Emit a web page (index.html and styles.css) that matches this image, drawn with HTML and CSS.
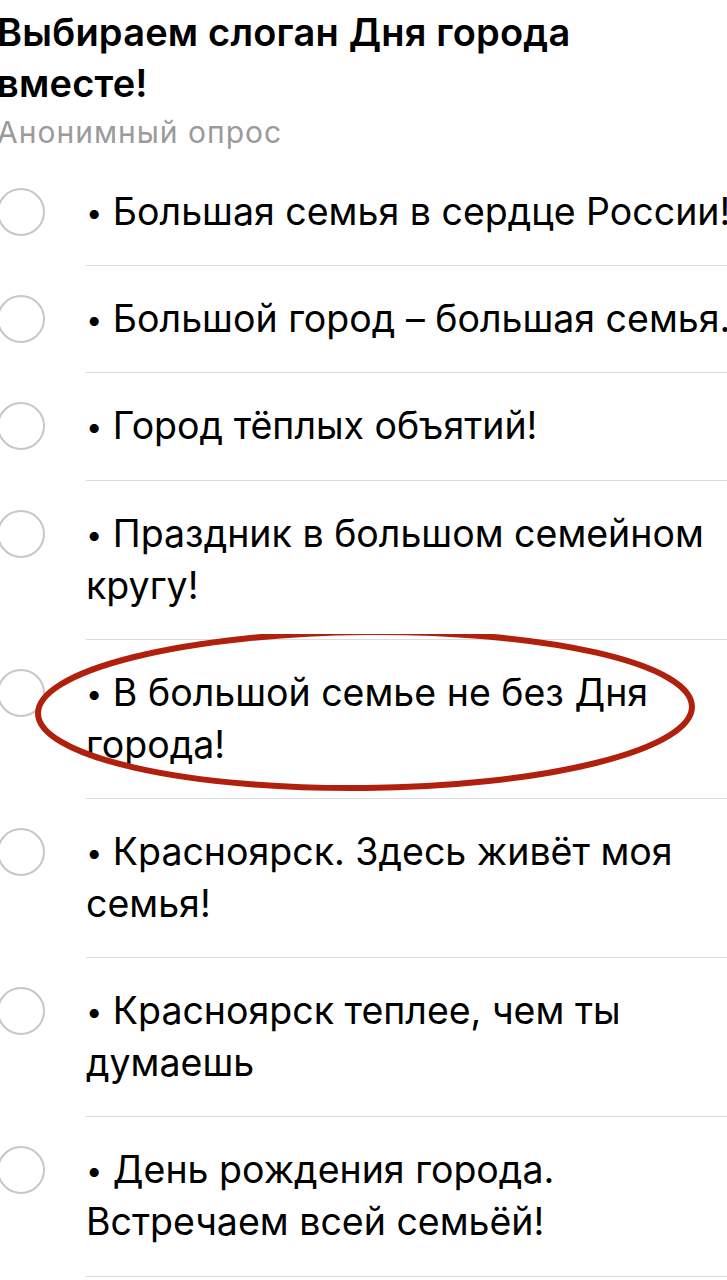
FILE: index.html
```html
<!DOCTYPE html>
<html lang="ru">
<head>
    <meta charset="UTF-8">
    <meta name="viewport" content="width=device-width, initial-scale=1.0">
    <title>Выбираем слоган Дня города вместе!</title>
    <link rel="stylesheet" href="styles.css">
</head>
<body>

<div class="poll">
    <h2 class="poll-title">Выбираем слоган Дня города<br>вместе!</h2>
    <div class="poll-type">Анонимный опрос</div>

    <ul class="options">
        <li class="option">
            <span class="radio"></span>
            <span class="option-text"><span class="dot">•</span> Большая семья в сердце России!</span>
        </li>
        <li class="option">
            <span class="radio"></span>
            <span class="option-text"><span class="dot">•</span> Большой город – большая семья.</span>
        </li>
        <li class="option">
            <span class="radio"></span>
            <span class="option-text"><span class="dot">•</span> Город тёплых объятий!</span>
        </li>
        <li class="option">
            <span class="radio"></span>
            <span class="option-text"><span class="dot">•</span> Праздник в большом семейном<br>кругу!</span>
        </li>
        <li class="option marked">
            <span class="radio"></span>
            <span class="option-text"><span class="dot">•</span> В большой семье не без Дня<br>города!</span>
            <!-- hand drawn mark -->
            <svg class="mark" width="680" height="180" viewBox="0 0 680 180">
                <ellipse cx="331" cy="76" rx="327" ry="78" fill="none" stroke="#b11f0d" stroke-width="6" transform="rotate(-0.6 331 76)"/>
            </svg>
        </li>
        <li class="option">
            <span class="radio"></span>
            <span class="option-text"><span class="dot">•</span> Красноярск. Здесь живёт моя<br>семья!</span>
        </li>
        <li class="option">
            <span class="radio"></span>
            <span class="option-text"><span class="dot">•</span> Красноярск теплее, чем ты<br>думаешь</span>
        </li>
        <li class="option">
            <span class="radio"></span>
            <span class="option-text"><span class="dot">•</span> День рождения города.<br>Встречаем всей семьёй!</span>
        </li>
    </ul>
</div>

</body>
</html>
```

FILE: styles.css
```css
body {
    margin: 0;
    background: #fff;
    color: #000;
    font-family: Inter, Roboto, "Noto Sans", Arial, sans-serif;
    overflow: hidden;
    width: 727px;
    height: 1280px;
}
.poll {
    margin-left: -3px;
    padding-top: 7px;
}
.poll-title {
    margin: 0;
    font-size: 38px;
    font-weight: 600;
    line-height: 51px;
    letter-spacing: 0.2px;
}
.poll-type {
    color: #9b9b9b;
    font-size: 30px;
    line-height: 46px;
    letter-spacing: 1px;
    margin-bottom: 4px;
}
.options {
    list-style: none;
    margin: 0;
    padding: 0;
}
.option {
    position: relative;
    display: flex;
    align-items: flex-start;
    gap: 41px;
}
.radio {
    flex: none;
    width: 44px;
    height: 44px;
    margin-top: 29px;
    border: 2px solid #c7c7c7;
    border-radius: 50%;
}
.option-text {
    flex: 1;
    padding: 27px 0 27.2px;
    border-bottom: 1px solid #dcdcdc;
    font-size: 37.5px;
    line-height: 52px;
    white-space: nowrap;
}
.dot {
    font-size: 29px;
    line-height: 1;
    vertical-align: 2px;
}
.mark {
    position: absolute;
    left: 37px;
    top: -6px;
    pointer-events: none;
}
```
